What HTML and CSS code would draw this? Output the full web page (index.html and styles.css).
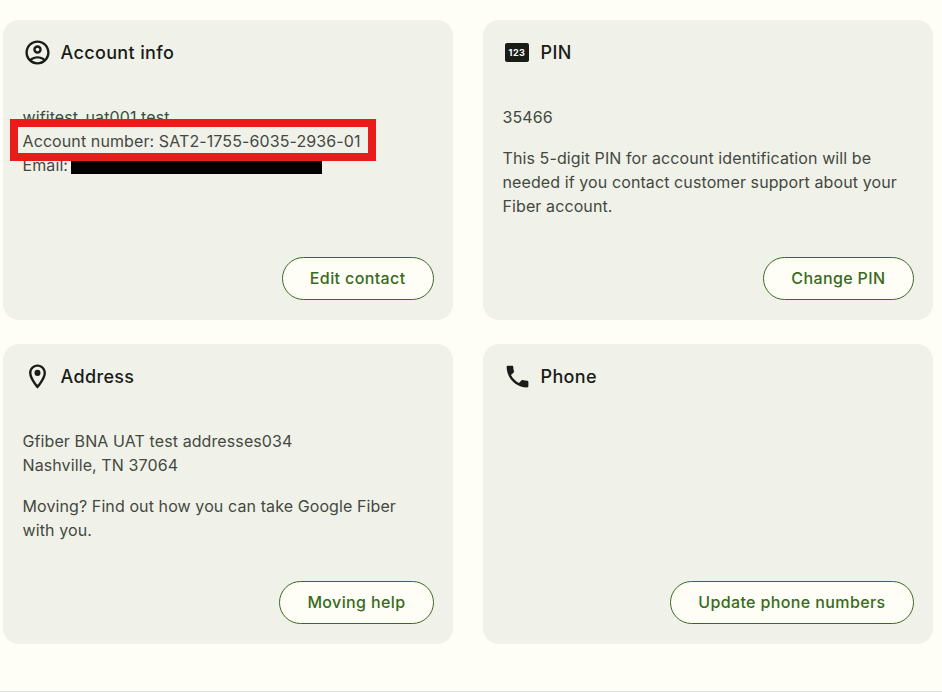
FILE: index.html
```html
<!doctype html>
<html lang="en">
  <head>
    <meta charset="UTF-8" />
    <title>Account</title>
    <link rel="stylesheet" href="styles.css">
  </head>
  <body>
    <main class="cards">
      <section class="card">
        <div class="card-header">
          <svg class="card-icon" viewBox="0 0 24 24"><path d="M12 2C6.48 2 2 6.48 2 12s4.48 10 10 10 10-4.48 10-10S17.52 2 12 2zM7.35 18.5C8.66 17.56 10.26 17 12 17s3.34.56 4.65 1.5C15.34 19.44 13.74 20 12 20s-3.34-.56-4.65-1.5zm10.79-1.38C16.45 15.8 14.32 15 12 15s-4.45.8-6.14 2.12C4.7 15.73 4 13.95 4 12c0-4.42 3.58-8 8-8s8 3.58 8 8c0 1.95-.7 3.73-1.86 5.12zM12 6c-1.93 0-3.5 1.57-3.5 3.5S10.07 13 12 13s3.5-1.57 3.5-3.5S13.93 6 12 6zm0 5c-.83 0-1.5-.67-1.5-1.5S11.17 8 12 8s1.5.67 1.5 1.5S12.83 11 12 11z"/></svg>
          <h2 class="card-title">Account info</h2>
        </div>
        <div class="card-body">
          <p>wifitest_uat001 test<br>Account number: SAT2-1755-6035-2936-01<br>Email: <span class="redacted"></span></p>
        </div>
        <button class="card-button">Edit contact</button>
        <div class="highlight"></div>
      </section>

      <section class="card">
        <div class="card-header">
          <div class="card-icon pin-icon"><span class="pin-badge">123</span></div>
          <h2 class="card-title">PIN</h2>
        </div>
        <div class="card-body">
          <p>35466</p>
          <p>This 5-digit PIN for account identification will be needed if you contact customer support about your Fiber account.</p>
        </div>
        <button class="card-button">Change PIN</button>
      </section>

      <section class="card">
        <div class="card-header">
          <svg class="card-icon" viewBox="0 0 24 24"><path d="M12 2C8.13 2 5 5.13 5 9c0 5.25 7 13 7 13s7-7.75 7-13c0-3.87-3.13-7-7-7zM7 9c0-2.76 2.24-5 5-5s5 2.24 5 5c0 2.88-2.88 7.19-5 9.88C9.92 16.21 7 11.85 7 9z"/><circle cx="12" cy="9" r="2.5"/></svg>
          <h2 class="card-title">Address</h2>
        </div>
        <div class="card-body">
          <p>Gfiber BNA UAT test addresses034<br>Nashville, TN 37064</p>
          <p>Moving? Find out how you can take Google Fiber with you.</p>
        </div>
        <button class="card-button">Moving help</button>
      </section>

      <section class="card">
        <div class="card-header">
          <svg class="card-icon" viewBox="0 0 24 24"><path d="M6.62 10.79c1.44 2.83 3.76 5.14 6.59 6.59l2.2-2.2c.27-.27.67-.36 1.02-.24 1.12.37 2.33.57 3.57.57.55 0 1 .45 1 1V20c0 .55-.45 1-1 1-9.39 0-17-7.61-17-17 0-.55.45-1 1-1h3.5c.55 0 1 .45 1 1 0 1.25.2 2.45.57 3.57.11.35.03.74-.25 1.02l-2.2 2.2z"/></svg>
          <h2 class="card-title">Phone</h2>
        </div>
        <div class="card-body"></div>
        <button class="card-button">Update phone numbers</button>
      </section>
    </main>
  </body>
</html>
```

FILE: styles.css
```css
:root {
  --page-bg: #fefef6;
  --card-bg: #f0f2ea;
  --text-dark: #1a1c18;
  --text-body: #44483f;
  --green: #386a20;
}

* {
  box-sizing: border-box;
  margin: 0;
  padding: 0;
}

body {
  font-family: Inter, "Liberation Sans", sans-serif;
  font-size: 16px;
  letter-spacing: 0.1px;
  line-height: 24px;
  color: var(--text-body);
  background-color: var(--page-bg);
}

.cards {
  display: grid;
  grid-template-columns: 450px 450px;
  grid-template-rows: 300px 300px;
  column-gap: 30px;
  row-gap: 24px;
  height: 692px;
  padding: 20px 0 0 3px;
  border-bottom: 1px solid #e2e3dc;
}

.card {
  position: relative;
  display: flex;
  flex-direction: column;
  padding: 18px 19.5px 20px 19.5px;
  background-color: var(--card-bg);
  border-radius: 16px;
}

.card-header {
  display: flex;
  align-items: center;
  gap: 9px;
  height: 29px;
  margin-bottom: 38px;
}

.card-icon {
  width: 29px;
  height: 29px;
  flex-shrink: 0;
  fill: var(--text-dark);
}

.card-title {
  font-size: 18px;
  font-weight: 500;
  letter-spacing: 0.35px;
  color: var(--text-dark);
}

.card-body {
  flex-grow: 1;
  padding-right: 5px;
}

.card-body p + p {
  margin-top: 17px;
}

.pin-icon {
  display: flex;
  align-items: center;
  justify-content: center;
}

.pin-badge {
  width: 24px;
  height: 19px;
  border-radius: 2px;
  background-color: var(--text-dark);
  color: #fff;
  font-size: 9px;
  font-weight: 700;
  line-height: 19px;
  letter-spacing: 0.5px;
  text-align: center;
}

.redacted {
  display: inline-block;
  width: 251px;
  height: 18px;
  margin-left: -1.5px;
  vertical-align: -3px;
  background-color: #000;
}

.card-button {
  align-self: flex-end;
  height: 43px;
  padding: 0 27px 2px;
  border: 1px solid var(--green);
  border-radius: 22px;
  background-color: var(--page-bg);
  color: var(--green);
  font-family: inherit;
  font-size: 16px;
  font-weight: 500;
  letter-spacing: 0.38px;
}

.highlight {
  position: absolute;
  left: 7px;
  top: 99px;
  width: 366px;
  height: 42px;
  border: 8px solid #e91c1c;
}
```
